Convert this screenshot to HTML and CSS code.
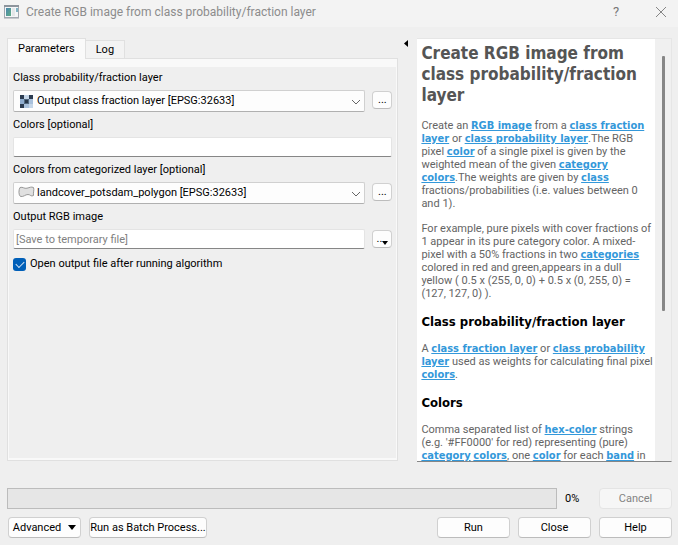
FILE: index.html
```html
<!DOCTYPE html>
<html lang="en">
<head>
<meta charset="utf-8">
<title>Create RGB image from class probability/fraction layer</title>
<link rel="stylesheet" href="styles.css">
</head>
<body>
<div class="dialog">
  <header class="titlebar">
    <svg class="app-icon" width="16" height="14" viewBox="0 0 16 14" aria-hidden="true">
      <defs><linearGradient id="app" x1="0" y1="0" x2="1" y2="1"><stop offset="0" stop-color="#4a86ae"/><stop offset="1" stop-color="#5fae86"/></linearGradient></defs>
      <rect x="0.5" y="0.5" width="14" height="12" fill="#f4f6f8" stroke="#a2a8b0"/>
      <path d="M0 1h15" stroke="#8d949c" stroke-width="2"/>
      <rect x="2" y="3" width="5" height="8" fill="url(#app)"/>
      <rect x="8" y="3" width="3" height="8" fill="#e3e7e9"/>
      <rect x="12" y="3" width="2" height="4" fill="#7fb3c4"/>
      <path d="M0 13.5h15" stroke="#c6cace"/>
    </svg>
    <h1 class="title">Create RGB image from class probability/fraction layer</h1>
    <button class="caption-button" type="button" aria-label="What's this?">?</button>
    <button class="caption-button" type="button" aria-label="Close window">
      <svg width="12" height="12" viewBox="0 0 12 12"><path d="M1 1l10 10M11 1L1 11" stroke="#858585" fill="none"/></svg>
    </button>
  </header>

  <main class="content">
    <section class="left">
      <div class="tabs" role="tablist">
        <button class="tab tab-active" type="button" role="tab" aria-selected="true">Parameters</button>
        <button class="tab" type="button" role="tab" aria-selected="false">Log</button>
      </div>
      <form class="panel" id="parameters">
        <label class="label" for="fraction">Class probability/fraction layer</label>
        <div class="row">
          <div class="combo">
            <svg class="layer-icon" width="13" height="13" viewBox="0 0 13 13" aria-hidden="true">
              <rect width="13" height="13" fill="#a9c1dc"/>
              <path d="M0 0h4v4H0zM9 0h4v4H9zM0 9h4v4H0z" fill="#2b3b50"/>
              <path d="M4 4h5v5H4z" fill="#52697f"/>
              <path d="M5 5h3v3H5z" fill="#26364a"/>
              <path d="M4 0h5v4H4zM9 9h4v4H9z" fill="#c5d6e8"/>
              <path d="M0 4h4v5H0z" fill="#8fadcf"/>
            </svg>
            <select class="select" id="fraction"><option>Output class fraction layer [EPSG:32633]</option></select>
            <svg class="chevron" width="10" height="6" viewBox="0 0 10 6" aria-hidden="true"><path d="M1 1l4 4 4-4" stroke="#666" fill="none"/></svg>
          </div>
          <button class="more" type="button" aria-label="Browse fraction layer">...</button>
        </div>

        <label class="label" for="colors">Colors [optional]</label>
        <div class="row"><input class="input" id="colors" type="text"></div>

        <label class="label" for="categorized">Colors from categorized layer [optional]</label>
        <div class="row">
          <div class="combo">
            <svg class="layer-icon polygon-icon" width="17" height="12" viewBox="0 0 17 12" aria-hidden="true">
              <path d="M2 1.5C5 .5 6 3 9 2.200C12 1.500 13 .5 15.500 1.500C16.500 4 15 6 15.500 9.500C13 11 12.500 8.500 10 8.500C7 8.500 6 11 2.500 10.500C.5 9 .5 4 2 1.500Z" fill="#e0e0e0" stroke="#999"/>
            </svg>
            <select class="select" id="categorized"><option>landcover_potsdam_polygon [EPSG:32633]</option></select>
            <svg class="chevron" width="10" height="6" viewBox="0 0 10 6" aria-hidden="true"><path d="M1 1l4 4 4-4" stroke="#666" fill="none"/></svg>
          </div>
          <button class="more" type="button" aria-label="Browse categorized layer">...</button>
        </div>

        <label class="label" for="output">Output RGB image</label>
        <div class="row">
          <input class="input" id="output" type="text" placeholder="[Save to temporary file]">
          <button class="more more-menu" type="button" aria-label="Output options">..<svg width="6" height="4" viewBox="0 0 6 4"><path d="M0 0h6L3 4z"/></svg></button>
        </div>

        <label class="check"><input class="checkbox" type="checkbox" checked>Open output file after running algorithm</label>
      </form>
    </section>

    <button class="collapse" type="button" aria-label="Collapse help"><svg width="4" height="7" viewBox="0 0 4 7"><path d="M4 0v7L0 3.500z"/></svg></button>

    <aside class="help">
      <article class="help-text">
        <h2 class="help-title">Create RGB image from<br>class probability/fraction<br>layer</h2>
        <p>Create an <a href="#">RGB image</a> from a <a href="#">class fraction<br>layer</a> or <a href="#">class probability layer</a>.The RGB<br>pixel <a href="#">color</a> of a single pixel is given by the<br>weighted mean of the given <a href="#">category<br>colors</a>.The weights are given by <a href="#">class</a><br>fractions/probabilities (i.e. values between 0<br>and 1).</p>
        <p>For example, pure pixels with cover fractions of<br>1 appear in its pure category color. A mixed-<br>pixel with a 50% fractions in two <a href="#">categories</a><br>colored in red and green,appears in a dull<br>yellow ( 0.5 x (255, 0, 0) + 0.5 x (0, 255, 0) =<br>(127, 127, 0) ).</p>
        <h3>Class probability/fraction layer</h3>
        <p>A <a href="#">class fraction layer</a> or <a href="#">class probability<br>layer</a> used as weights for calculating final pixel<br><a href="#">colors</a>.</p>
        <h3>Colors</h3>
        <p>Comma separated list of <a href="#">hex-color</a> strings<br>(e.g. '#FF0000' for red) representing (pure)<br><a href="#">category</a> <a href="#">colors</a>, one <a href="#">color</a> for each <a href="#">band</a> in</p>
      </article>
      <div class="scrollbar"><div class="thumb"></div></div>
    </aside>
  </main>

  <footer class="footer">
    <div class="status">
      <div class="progress" role="progressbar" aria-label="Progress" aria-valuenow="0" aria-valuemin="0" aria-valuemax="100"></div>
      <span class="percent">0%</span>
      <button class="button" type="button" disabled>Cancel</button>
    </div>
    <div class="actions">
      <button class="button" type="button">Advanced<svg class="drop" width="8" height="5" viewBox="0 0 8 5"><path d="M0 0h8L4 5z"/></svg></button>
      <button class="button button-wide" type="button">Run as Batch Process...</button>
      <span class="spacer"></span>
      <button class="button" type="button">Run</button>
      <button class="button" type="button">Close</button>
      <button class="button" type="button">Help</button>
    </div>
  </footer>
</div>
</body>
</html>
```
FILE: styles.css
```css
* { box-sizing: border-box; }

body {
  margin: 0;
  background: #efefef;
  color: #000;
  font: 11px/14px Roboto, sans-serif;
}

button, input, select { font: inherit; color: inherit; margin: 0; }
button { padding: 0; }
svg { display: block; flex: none; }

.dialog { display: flex; flex-direction: column; height: 100vh; }

.titlebar {
  display: flex;
  align-items: center;
  height: 27px;
  padding: 0 2px 4px 4px;
  background: #f3f3f3;
}
.title {
  flex: 1;
  margin: 0 0 0 6px;
  color: #8c8c8c;
  font: 12px/16px Roboto, sans-serif;
  white-space: nowrap;
}
.caption-button {
  display: flex;
  align-items: center;
  justify-content: center;
  width: 30px;
  height: 22px;
  margin-left: 15px;
  border: 0;
  background: none;
  color: #777;
  font-size: 13px;
}

.content {
  display: flex;
  flex: 1;
  min-height: 0;
  padding: 11px 6px 0 7px;
}
.left { display: flex; flex-direction: column; flex: 392; margin-bottom: 1px; }

.tabs { display: flex; align-items: flex-end; height: 20px; }
.tab {
  height: 18px;
  padding: 0 10px;
  border: 1px solid #e0e0e0;
  border-width: 1px 1px 0 0;
  background: #f3f3f3;
}
.tab-active {
  height: 21px;
  margin-bottom: -1px;
  z-index: 1;
  border-left-width: 1px;
  background: #fafafa;
}

.panel {
  display: flex;
  flex-direction: column;
  flex: 1;
  padding: 12px 5px 0 5px;
  border: 1px solid #e0e0e0;
  box-shadow: inset 0 8px #f9f9f9, inset 1px 0 #f9f9f9, inset -1px 0 #f9f9f9, inset 0 -2px #f9f9f9;
}
.label { margin-bottom: 5px; white-space: nowrap; }
.row { display: flex; gap: 7px; margin-bottom: 6px; }
.combo { position: relative; display: flex; flex: 1; }
.select {
  width: 100%;
  height: 22px;
  padding: 0 24px 0 23px;
  border: 1px solid #d0d0d0;
  border-bottom-color: #b0b0b0;
  border-radius: 2px;
  background: #fdfdfd;
  appearance: none;
}
.layer-icon { position: absolute; left: 7px; top: 5px; }
.polygon-icon { left: 5px; top: 4px; }
.chevron { position: absolute; right: 4px; top: 9px; }
.input {
  flex: 1;
  min-width: 0;
  height: 20px;
  padding: 0 2px;
  border: 1px solid #e4e4e4;
  border-bottom-color: #868686;
  border-radius: 2px;
  background: #fff;
}
.input::placeholder { color: #7f7f7f; opacity: 1; }
.more {
  width: 20px;
  height: 18px;
  margin-top: 1px;
  border: 1px solid #d0d0d0;
  border-bottom-color: #bcbcbc;
  border-radius: 4px;
  background: #fdfdfd;
}
.more-menu { display: flex; align-items: center; justify-content: center; }
.more-menu svg { margin-top: 7px; }
.check { display: flex; align-items: center; gap: 4px; margin-top: 2px; }
.checkbox {
  width: 13px;
  height: 13px;
  border-radius: 3px;
  background: #005fb8;
  appearance: none;
  display: grid;
  place-items: center;
}
.checkbox:checked::before {
  content: "";
  width: 7px;
  height: 4px;
  border: solid #cfe2f5;
  border-width: 0 0 1px 1px;
  transform: translateY(-1px) rotate(-45deg);
}

.collapse {
  align-self: flex-start;
  display: flex;
  justify-content: center;
  width: 19px;
  padding: 2px 3px 0 0;
  border: 0;
  background: none;
}

.help {
  display: flex;
  flex: 254;
  min-width: 0;
  border: 1px solid #e6e6e6;
  border-left: 0;
  border-bottom-color: #868686;
  background: #fff;
}
.help-text {
  flex: 1;
  min-width: 0;
  padding: 4px 0 0 4px;
  overflow: clip;
  overflow-clip-margin: 2px;
  color: #646464;
  font: 11px/13px Roboto, sans-serif;
  white-space: nowrap;
}
.help-title, .help-text h3, .help-text a { font-family: "DejaVu Sans Condensed", sans-serif; }
.help-title {
  margin: 0 0 13px;
  color: #555;
  font-size: 17px;
  line-height: 21px;
}
.help-text p { margin: 0 0 12px; }
.help-text p:last-child { margin: 0; }
.help-text h3 {
  margin: 14px 0 12px;
  color: #000;
  font-size: 13px;
  line-height: 16px;
}
.help-text a { color: #3398da; font-weight: bold; }
.scrollbar { width: 16px; padding: 17px 6px 0 7px; background: #f0f0f0; }
.thumb { height: 63%; border-radius: 1px; background: #868686; }

.footer { padding: 26px 6px 7px 7px; }
.status, .actions { display: flex; align-items: center; gap: 8px; }
.status { margin-bottom: 8px; }
.progress {
  flex: 1;
  height: 21px;
  border: 1px solid #bcbcbc;
  background: #e6e6e6;
}
.percent { width: 26px; }
.actions { padding-left: 1px; }
.button {
  display: flex;
  align-items: center;
  justify-content: center;
  width: 73px;
  height: 21px;
  border: 1px solid #d0d0d0;
  border-bottom-color: #bcbcbc;
  border-radius: 4px;
  background: #fdfdfd;
  white-space: nowrap;
}
.button:disabled { border-color: #e4e4e4; background: #f6f6f6; color: #838383; }
.button-wide { width: 118px; }
.drop { margin-left: 7px; }
.spacer { flex: 1; }
```
